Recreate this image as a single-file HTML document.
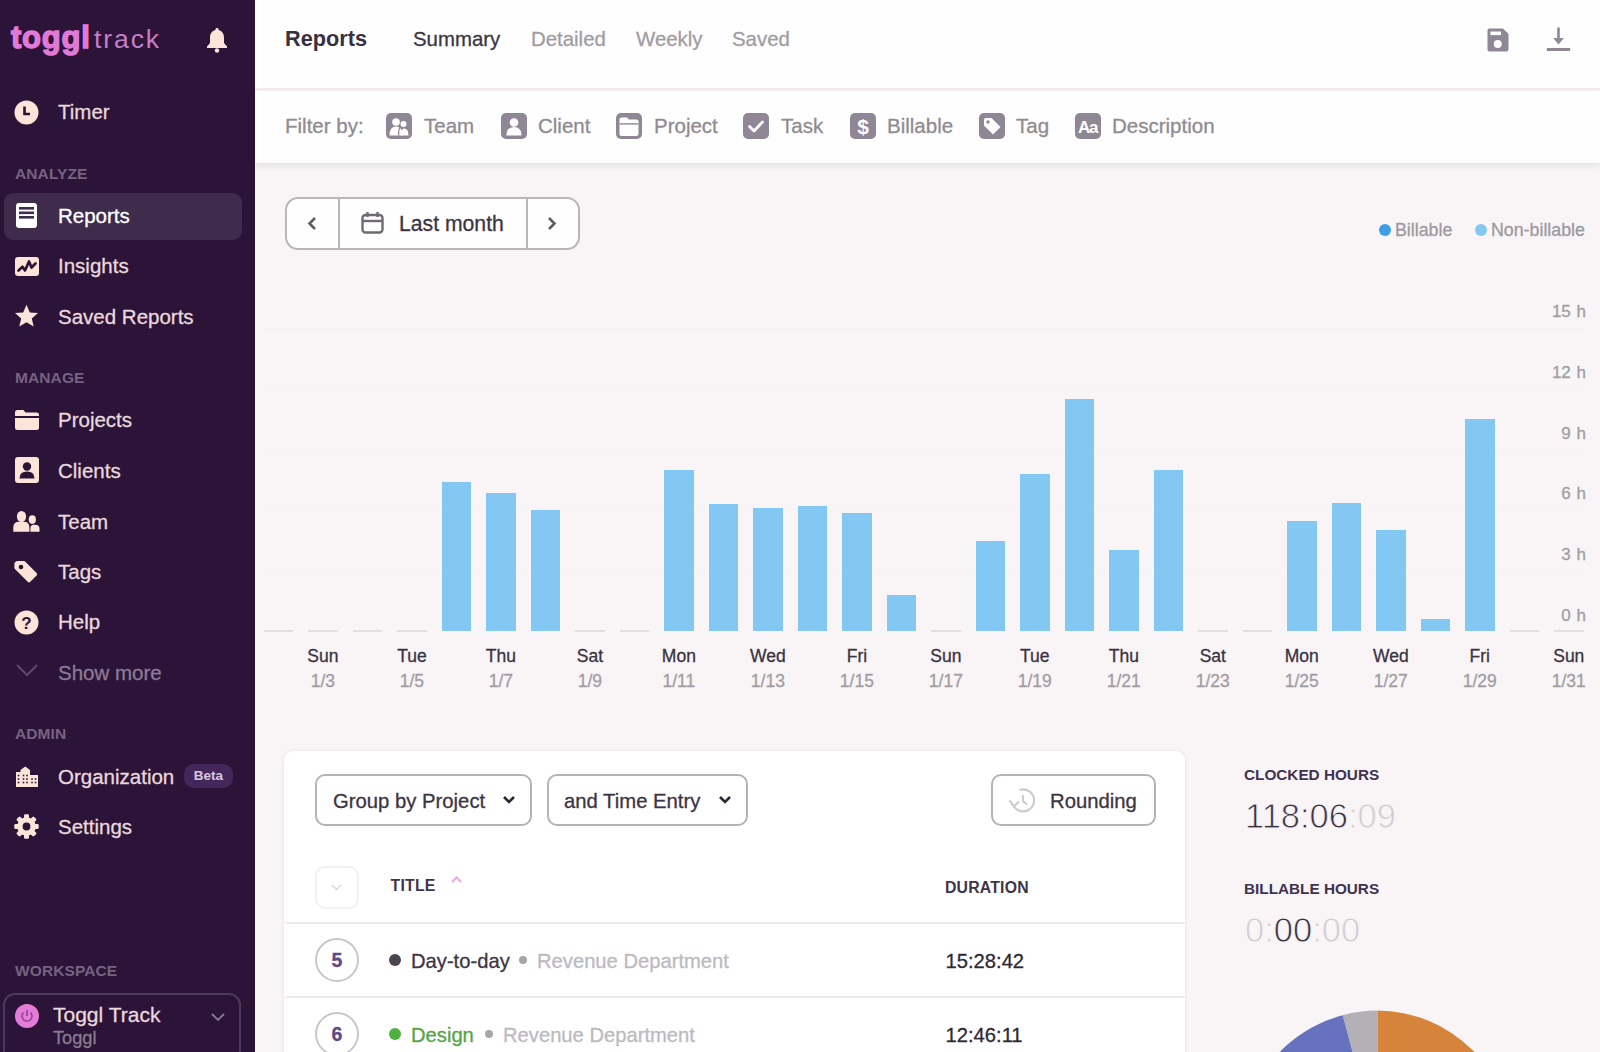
<!DOCTYPE html>
<html><head><meta charset="utf-8">
<style>
*{box-sizing:border-box;margin:0;padding:0}
html,body{width:1600px;height:1052px;overflow:hidden;background:#f9f5f7;font-family:"Liberation Sans",sans-serif}
.a{position:absolute;white-space:nowrap}
#sb div,#hdr div,#flt div,#main div{-webkit-text-stroke:0.3px currentColor}
#sb{position:absolute;left:0;top:0;width:255px;height:1052px;background:#2c1338}
.si{position:absolute;left:58px;font-size:20.5px;color:#e9d8dc;line-height:24px;margin-top:0.8px}
.sh{-webkit-text-stroke:0 !important;position:absolute;left:15px;font-size:15.5px;color:#77637f;letter-spacing:0.1px;font-weight:bold;line-height:16px;margin-top:0.8px}
.ic{position:absolute;left:14px}
#hdr{position:absolute;left:255px;top:0;width:1345px;height:90px;background:#fefefe;border-bottom:2px solid #efedef}
#flt{position:absolute;left:255px;top:91px;width:1345px;height:72px;background:#fefefe;box-shadow:0 2px 7px rgba(0,0,0,0.10)}
.tab{position:absolute;top:26px;font-size:20.4px;line-height:26px;color:#a19da2}
.fi{position:absolute;top:21.5px;width:26px;height:26px}
.ft{position:absolute;top:21.5px;font-size:20.5px;line-height:26px;color:#8f8b91}
.bar{position:absolute;width:29.5px;background:#82c8f2}
.dash{position:absolute;top:630px;width:29.5px;height:2px;background:#e3dfe0}
.xl{position:absolute;top:644.5px;width:80px;text-align:center;font-size:17.5px;line-height:22px;color:#3a3340}
.xd{position:absolute;top:670.3px;width:80px;text-align:center;font-size:17.5px;line-height:22px;color:#a19da3}
.grid{position:absolute;left:263px;width:1323px;height:1px;background:#f6f2f3}
.yl{position:absolute;left:1500px;width:86px;text-align:right;font-size:17px;line-height:22px;color:#a19da3;margin-top:0.8px;word-spacing:1px}
.btn{position:absolute;height:52px;border:2px solid #b5b2b6;border-radius:10px;background:#fff}
.bt{position:absolute;font-size:20.3px;line-height:26px;margin-top:1px;color:#3d3443;white-space:nowrap}
.th{position:absolute;top:876px;-webkit-text-stroke:0 !important;font-size:15.8px;font-weight:bold;line-height:20px;letter-spacing:0.25px;color:#3f3547;white-space:nowrap}
.num{position:absolute;left:315px;width:44px;height:44px;border:2px solid #c9c6ca;border-radius:22px;text-align:center;font-size:19.5px;line-height:41px;color:#5f4a85;font-weight:bold}
.rt{position:absolute;font-size:20.2px;line-height:26px;margin-top:1px;white-space:nowrap}
</style></head><body>
<div id="sb">
  <!-- logo -->
  <div class="a" style="left:11px;top:20px;font-size:31px;font-weight:bold;color:#e07ad6;letter-spacing:0.8px;line-height:36px;-webkit-text-stroke:1.4px #e07ad6">toggl</div>
  <div class="a" style="left:94px;top:23px;font-size:26.5px;color:#c77ec9;-webkit-text-stroke:0;line-height:32px;letter-spacing:1.9px">track</div>
  <!-- bell -->
  <svg class="a" style="left:206px;top:27px" width="22" height="26" viewBox="0 0 22 26"><path d="M11 1c1 0 1.6.7 1.6 1.6v.5C16 4 18 7 18 10.5v5.5l3 3.5v1.5H1v-1.5l3-3.5v-5.5C4 7 6 4 9.4 3.1v-.5C9.4 1.7 10 1 11 1z" fill="#fce5d8"/><circle cx="11" cy="23.5" r="2.2" fill="#fce5d8"/></svg>

  <!-- Timer -->
  <svg class="ic" style="top:100px" width="25" height="25" viewBox="0 0 25 25"><circle cx="12.5" cy="12.5" r="12" fill="#fce5d8"/><path d="M10.5 6.5v7.5h5.5" stroke="#2c1338" stroke-width="2.6" fill="none"/></svg>
  <div class="si" style="top:99px">Timer</div>

  <div class="sh" style="top:165px">ANALYZE</div>
  <div class="a" style="left:3.5px;top:192.5px;width:238px;height:47px;border-radius:9px;background:#3f2b4b"></div>
  <svg class="ic" style="left:16px;top:203px" width="21" height="25" viewBox="0 0 21 25"><rect x="0" y="0" width="21" height="25" rx="3" fill="#fff"/><rect x="3" y="4" width="15" height="2.6" fill="#3f2b4b"/><rect x="3" y="8.5" width="15" height="2.6" fill="#3f2b4b"/><rect x="3" y="13" width="15" height="2.6" fill="#3f2b4b"/></svg>
  <div class="si" style="top:203px;color:#fff">Reports</div>

  <svg class="ic" style="left:15px;top:257px" width="24" height="19" viewBox="0 0 24 19"><rect x="0" y="0" width="24" height="19" rx="3" fill="#fce5d8"/><path d="M3.5 13.5L7.5 9.8 10 13.5 14 4.5 16.5 10.5 20.5 6.5" stroke="#2c1338" stroke-width="2.7" fill="none" stroke-linejoin="round" stroke-linecap="round"/></svg>
  <div class="si" style="top:253.2px">Insights</div>

  <svg class="ic" style="left:14px;top:304px" width="25" height="25" viewBox="0 0 25 25"><path d="M12.5 0.8l3.3 7.6 8.2.7-6.2 5.4 1.9 8.1-7.2-4.3-7.2 4.3 1.9-8.1L1 9.1l8.2-.7z" fill="#fce5d8"/></svg>
  <div class="si" style="top:304px">Saved Reports</div>

  <div class="sh" style="top:369px">MANAGE</div>

  <svg class="ic" style="left:15px;top:410px" width="24" height="20" viewBox="0 0 24 20"><path d="M0 2.5Q0 0 2.5 0h6l2 2.5h11Q24 2.5 24 4.5V6H0z" fill="#fce5d8"/><path d="M0 8h24v9.5Q24 20 21.5 20h-19Q0 20 0 17.5z" fill="#fce5d8"/></svg>
  <div class="si" style="top:407.4px">Projects</div>

  <svg class="ic" style="left:15px;top:457px" width="24" height="26" viewBox="0 0 24 26"><rect x="0" y="0" width="24" height="26" rx="3" fill="#fce5d8"/><circle cx="12" cy="9.5" r="4.2" fill="#2c1338"/><path d="M4.5 21.5q0-7 7.5-7t7.5 7z" fill="#2c1338"/></svg>
  <div class="si" style="top:458px">Clients</div>

  <svg class="a" style="left:0;top:500px" width="45" height="40" viewBox="0 500 45 40"><ellipse cx="21.5" cy="516.5" rx="4.6" ry="5.5" fill="#fce5d8"/><path d="M13.3 531.7V527.5Q13.3 521.8 19 521.8H24Q29.4 521.8 29.4 527.5V531.7z" fill="#fce5d8"/><ellipse cx="32.3" cy="519.6" rx="3.6" ry="4.4" fill="#fce5d8"/><path d="M30.4 531.7V528.8Q30.4 524.8 33.5 524.8H35Q39.5 524.8 39.5 528.8V531.7z" fill="#fce5d8"/></svg>
  <div class="si" style="top:509px">Team</div>

  <svg class="a" style="left:0;top:550px" width="45" height="40" viewBox="0 550 45 40"><path d="M17.2 562.7H23.8L35.3 574.2 29 580.5 16.2 567.7V563.7z" fill="#fce5d8" stroke="#fce5d8" stroke-width="3.6" stroke-linejoin="round"/><circle cx="21" cy="567" r="2.3" fill="#2c1338"/></svg>
  <div class="si" style="top:559px">Tags</div>

  <svg class="ic" style="left:14px;top:610px" width="25" height="25" viewBox="0 0 25 25"><circle cx="12.5" cy="12.5" r="12" fill="#fce5d8"/><text x="12.5" y="18.5" text-anchor="middle" font-family="Liberation Sans" font-weight="bold" font-size="17" fill="#2c1338">?</text></svg>
  <div class="si" style="top:609px">Help</div>

  <svg class="ic" style="left:16px;top:664px" width="22" height="14" viewBox="0 0 22 14"><path d="M1 1l10 10L21 1" stroke="#5e4868" stroke-width="2" fill="none"/></svg>
  <div class="si" style="top:660px;color:#8c7b95">Show more</div>

  <div class="sh" style="top:725px">ADMIN</div>

  <svg class="ic" style="left:16px;top:766px" width="22" height="21" viewBox="0 0 22 21"><rect x="0" y="6" width="5" height="15" fill="#fce5d8"/><path d="M4.5 4L9.25 0.5 14 4V21H4.5z" fill="#fce5d8"/><rect x="13.5" y="9" width="8.5" height="12" fill="#fce5d8"/><rect x="1.7" y="8.7" width="1.6" height="1.6" fill="#2c1338"/><rect x="1.7" y="12.2" width="1.6" height="1.6" fill="#2c1338"/><rect x="1.7" y="15.7" width="1.6" height="1.6" fill="#2c1338"/><rect x="6.7" y="8.7" width="1.6" height="1.6" fill="#2c1338"/><rect x="6.7" y="12.2" width="1.6" height="1.6" fill="#2c1338"/><rect x="6.7" y="15.7" width="1.6" height="1.6" fill="#2c1338"/><rect x="10.2" y="8.7" width="1.6" height="1.6" fill="#2c1338"/><rect x="10.2" y="12.2" width="1.6" height="1.6" fill="#2c1338"/><rect x="10.2" y="15.7" width="1.6" height="1.6" fill="#2c1338"/><rect x="15.2" y="12.2" width="1.6" height="1.6" fill="#2c1338"/><rect x="15.2" y="15.7" width="1.6" height="1.6" fill="#2c1338"/><rect x="18.7" y="12.2" width="1.6" height="1.6" fill="#2c1338"/><rect x="18.7" y="15.7" width="1.6" height="1.6" fill="#2c1338"/></svg>
  <div class="si" style="top:763.8px">Organization</div>
  <div class="a" style="left:184px;top:764px;width:49px;height:24px;border-radius:10px;background:#44275a;color:#d8c6e2;font-size:13.5px;font-weight:bold;line-height:24px;text-align:center;-webkit-text-stroke:0">Beta</div>

  <svg class="ic" style="left:14px;top:814px" width="25" height="25" viewBox="0 0 25 25"><circle cx="12.5" cy="12.5" r="9.3" fill="#fce5d8"/><rect x="10" y="0.3" width="5" height="5" rx="1.2" fill="#fce5d8" transform="rotate(0 12.5 12.5)"/><rect x="10" y="0.3" width="5" height="5" rx="1.2" fill="#fce5d8" transform="rotate(45 12.5 12.5)"/><rect x="10" y="0.3" width="5" height="5" rx="1.2" fill="#fce5d8" transform="rotate(90 12.5 12.5)"/><rect x="10" y="0.3" width="5" height="5" rx="1.2" fill="#fce5d8" transform="rotate(135 12.5 12.5)"/><rect x="10" y="0.3" width="5" height="5" rx="1.2" fill="#fce5d8" transform="rotate(180 12.5 12.5)"/><rect x="10" y="0.3" width="5" height="5" rx="1.2" fill="#fce5d8" transform="rotate(225 12.5 12.5)"/><rect x="10" y="0.3" width="5" height="5" rx="1.2" fill="#fce5d8" transform="rotate(270 12.5 12.5)"/><rect x="10" y="0.3" width="5" height="5" rx="1.2" fill="#fce5d8" transform="rotate(315 12.5 12.5)"/><circle cx="12.5" cy="12.5" r="3.9" fill="#2c1338"/></svg>
  <div class="si" style="top:813.8px">Settings</div>

  <div class="sh" style="top:962px">WORKSPACE</div>
  <div class="a" style="left:3px;top:993px;width:238px;height:70px;border:2px solid #4d3a57;border-radius:12px"></div>
  <svg class="ic" style="left:15px;top:1004px" width="24" height="24" viewBox="0 0 24 24"><circle cx="12" cy="12" r="12" fill="#e57cd8"/><path d="M8.5 8.5a5 5 0 1 0 7 0" stroke="#9a4c9c" stroke-width="1.8" fill="none"/><path d="M12 6v6" stroke="#9a4c9c" stroke-width="1.8"/></svg>
  <div class="si" style="left:53px;top:1002px;font-size:21px">Toggl Track</div>
  <div class="si" style="left:53px;top:1025px;font-size:18.2px;color:#8a7a90">Toggl</div>
  <svg class="a" style="left:211px;top:1013px" width="14" height="9" viewBox="0 0 14 9"><path d="M1 1l6 6 6-6" stroke="#8c7b95" stroke-width="1.8" fill="none"/></svg>
</div>

<!-- header -->
<div id="hdr">
  <div class="a" style="left:30px;top:26px;font-size:21.7px;font-weight:bold;color:#38303f;-webkit-text-stroke:0;line-height:26px">Reports</div>
  <div class="tab" style="left:158px;color:#3d3545">Summary</div>
  <div class="tab" style="left:276px">Detailed</div>
  <div class="tab" style="left:381px">Weekly</div>
  <div class="tab" style="left:477px">Saved</div>
  <svg class="a" style="left:1232px;top:28px" width="22" height="24" viewBox="0 0 22 24"><path d="M2.5 0.5h13.5l5.5 5.5v15.5q0 2-2 2h-17q-2 0-2-2v-19q0-2 2-2z" fill="#8f8795"/><rect x="3.5" y="3.5" width="10.5" height="3.6" fill="#fefefe"/><circle cx="10.75" cy="16" r="4" fill="#fefefe"/></svg>
  <svg class="a" style="left:1290px;top:26px" width="26" height="27" viewBox="0 0 26 27"><path d="M13.5 1.5v12" stroke="#8f8795" stroke-width="2.6"/><path d="M8.2 12h10.6l-5.3 6.6z" fill="#8f8795"/><path d="M1.8 23.5h23.4" stroke="#8f8795" stroke-width="3"/></svg>
</div>

<!-- filter bar -->
<div id="flt">
  <div class="ft" style="left:30px">Filter by:</div>
  <div class="fi" style="left:131px"><svg width="26" height="26" viewBox="0 0 26 26"><rect width="26" height="26" rx="5" fill="#8f8795"/><circle cx="10" cy="9" r="3.8" fill="#fff"/><path d="M3.5 22.5q0-9 6.5-9t6.5 9z" fill="#fff"/><circle cx="17.5" cy="11" r="3" fill="#fff"/><path d="M14.8 22.5q.5-7 3.2-7 4.5 0 4.5 7z" fill="#fff"/><path d="M14.2 13.8q-1.6 1.5-1.6 8.7" stroke="#8f8795" stroke-width="1.3" fill="none"/></svg></div><div class="ft" style="left:169px">Team</div>
  <div class="fi" style="left:246px"><svg width="26" height="26" viewBox="0 0 26 26"><rect width="26" height="26" rx="5" fill="#8f8795"/><circle cx="13" cy="9.5" r="4.3" fill="#fff"/><path d="M5.5 22.5q0-8.5 7.5-8.5t7.5 8.5z" fill="#fff"/></svg></div><div class="ft" style="left:283px">Client</div>
  <div class="fi" style="left:361px"><svg width="26" height="26" viewBox="0 0 26 26"><rect width="26" height="26" rx="5" fill="#8f8795"/><path d="M5.5 4.5h5.5l2 2h7.5q2 0 2 2v12.5q0 2-2 2h-15q-2 0-2-2v-14.5q0-2 2-2z" fill="#fff"/><rect x="3.5" y="10.2" width="19" height="1.4" fill="#8f8795"/></svg></div><div class="ft" style="left:399px">Project</div>
  <div class="fi" style="left:488px"><svg width="26" height="26" viewBox="0 0 26 26"><rect width="26" height="26" rx="5" fill="#8f8795"/><path d="M6.5 13.5l4.5 4.5 8.5-9" stroke="#fff" stroke-width="2.8" fill="none" stroke-linecap="round" stroke-linejoin="round"/></svg></div><div class="ft" style="left:526px">Task</div>
  <div class="fi" style="left:595px"><svg width="26" height="26" viewBox="0 0 26 26"><rect width="26" height="26" rx="5" fill="#8f8795"/><text x="13" y="21" text-anchor="middle" font-family="Liberation Sans" font-weight="bold" font-size="21" fill="#fff">$</text></svg></div><div class="ft" style="left:632px">Billable</div>
  <div class="fi" style="left:724px"><svg width="26" height="26" viewBox="0 0 26 26"><rect width="26" height="26" rx="5" fill="#8f8795"/><path d="M5 6.5q0-1.5 1.5-1.5h6l9 9-7.5 7.5-9-9z" fill="#fff"/><circle cx="9" cy="9" r="1.7" fill="#8f8795"/></svg></div><div class="ft" style="left:761px">Tag</div>
  <div class="fi" style="left:820px"><svg width="26" height="26" viewBox="0 0 26 26"><rect width="26" height="26" rx="5" fill="#8f8795"/><text x="12.5" y="19.5" text-anchor="middle" font-family="Liberation Sans" font-weight="bold" font-size="17" letter-spacing="-1.3" fill="#fff">Aa</text></svg></div><div class="ft" style="left:857px">Description</div>
</div>

<div id="main">
  <!-- date picker -->
  <div class="a" style="left:285px;top:197px;width:295px;height:53px;border:2px solid #b9b6ba;border-radius:13px;background:#fefefe"></div>
  <div class="a" style="left:338px;top:199px;width:2px;height:49px;background:#b9b6ba"></div>
  <div class="a" style="left:526px;top:199px;width:2px;height:49px;background:#b9b6ba"></div>
  <svg class="a" style="left:306px;top:216px" width="12" height="15" viewBox="0 0 12 15"><path d="M9 2L3.5 7.5 9 13" stroke="#615a66" stroke-width="2.6" fill="none"/></svg>
  <svg class="a" style="left:546px;top:216px" width="12" height="15" viewBox="0 0 12 15"><path d="M3 2l5.5 5.5L3 13" stroke="#615a66" stroke-width="2.6" fill="none"/></svg>
  <svg class="a" style="left:361px;top:211px" width="23" height="23" viewBox="0 0 23 23"><rect x="1.5" y="4" width="20" height="17.5" rx="3" stroke="#706a75" stroke-width="2.4" fill="none"/><path d="M1.5 10h20" stroke="#706a75" stroke-width="2.4"/><path d="M6.5 1v5M16.5 1v5" stroke="#706a75" stroke-width="2.4"/></svg>
  <div class="a" style="left:399px;top:210.5px;font-size:21.2px;line-height:26px;color:#3d3443">Last month</div>

  <!-- legend -->
  <div class="a" style="left:1379px;top:223.8px;width:12px;height:12px;border-radius:6px;background:#3c9fe8"></div>
  <div class="a" style="left:1395px;top:219px;font-size:17.8px;line-height:22px;color:#9d99a0">Billable</div>
  <div class="a" style="left:1475px;top:223.8px;width:12px;height:12px;border-radius:6px;background:#82c8f3"></div>
  <div class="a" style="left:1491px;top:219px;font-size:17.8px;line-height:22px;color:#9d99a0">Non-billable</div>

  <!-- gridlines -->
  <div class="grid" style="top:329px"></div>
  <div class="grid" style="top:387px"></div>
  <div class="grid" style="top:448px"></div>
  <div class="grid" style="top:509px"></div>
  <div class="grid" style="top:570px"></div>
  <!-- y labels -->
  <div class="yl" style="top:300px">15 h</div>
  <div class="yl" style="top:361px">12 h</div>
  <div class="yl" style="top:422px">9 h</div>
  <div class="yl" style="top:482px">6 h</div>
  <div class="yl" style="top:543px">3 h</div>
  <div class="yl" style="top:604px">0 h</div>
<div class="dash" style="left:263.6px"></div>
<div class="dash" style="left:308.1px"></div>
<div class="dash" style="left:352.6px"></div>
<div class="dash" style="left:397.1px"></div>
<div class="bar" style="left:441.6px;top:481.6px;height:149.4px"></div>
<div class="bar" style="left:486.1px;top:492.5px;height:138.5px"></div>
<div class="bar" style="left:530.6px;top:509.7px;height:121.3px"></div>
<div class="dash" style="left:575.1px"></div>
<div class="dash" style="left:619.6px"></div>
<div class="bar" style="left:664.1px;top:469.7px;height:161.3px"></div>
<div class="bar" style="left:708.6px;top:504.4px;height:126.6px"></div>
<div class="bar" style="left:753.1px;top:508.0px;height:123.0px"></div>
<div class="bar" style="left:797.6px;top:505.6px;height:125.4px"></div>
<div class="bar" style="left:842.1px;top:512.5px;height:118.5px"></div>
<div class="bar" style="left:886.6px;top:595.0px;height:36.0px"></div>
<div class="dash" style="left:931.1px"></div>
<div class="bar" style="left:975.6px;top:541.0px;height:90.0px"></div>
<div class="bar" style="left:1020.1px;top:473.8px;height:157.2px"></div>
<div class="bar" style="left:1064.6px;top:399.4px;height:231.6px"></div>
<div class="bar" style="left:1109.1px;top:550.3px;height:80.7px"></div>
<div class="bar" style="left:1153.6px;top:469.7px;height:161.3px"></div>
<div class="dash" style="left:1198.1px"></div>
<div class="dash" style="left:1242.6px"></div>
<div class="bar" style="left:1287.1px;top:521.0px;height:110.0px"></div>
<div class="bar" style="left:1331.6px;top:503.4px;height:127.6px"></div>
<div class="bar" style="left:1376.1px;top:530.3px;height:100.7px"></div>
<div class="bar" style="left:1420.6px;top:619.0px;height:12.0px"></div>
<div class="bar" style="left:1465.1px;top:419.4px;height:211.6px"></div>
<div class="dash" style="left:1509.6px"></div>
<div class="dash" style="left:1554.1px"></div>
<div class="xl" style="left:282.9px">Sun</div><div class="xd" style="left:282.9px">1/3</div>
<div class="xl" style="left:371.9px">Tue</div><div class="xd" style="left:371.9px">1/5</div>
<div class="xl" style="left:460.9px">Thu</div><div class="xd" style="left:460.9px">1/7</div>
<div class="xl" style="left:549.9px">Sat</div><div class="xd" style="left:549.9px">1/9</div>
<div class="xl" style="left:638.9px">Mon</div><div class="xd" style="left:638.9px">1/11</div>
<div class="xl" style="left:727.9px">Wed</div><div class="xd" style="left:727.9px">1/13</div>
<div class="xl" style="left:816.9px">Fri</div><div class="xd" style="left:816.9px">1/15</div>
<div class="xl" style="left:905.9px">Sun</div><div class="xd" style="left:905.9px">1/17</div>
<div class="xl" style="left:994.8px">Tue</div><div class="xd" style="left:994.8px">1/19</div>
<div class="xl" style="left:1083.8px">Thu</div><div class="xd" style="left:1083.8px">1/21</div>
<div class="xl" style="left:1172.8px">Sat</div><div class="xd" style="left:1172.8px">1/23</div>
<div class="xl" style="left:1261.8px">Mon</div><div class="xd" style="left:1261.8px">1/25</div>
<div class="xl" style="left:1350.8px">Wed</div><div class="xd" style="left:1350.8px">1/27</div>
<div class="xl" style="left:1439.8px">Fri</div><div class="xd" style="left:1439.8px">1/29</div>
<div class="xl" style="left:1528.8px">Sun</div><div class="xd" style="left:1528.8px">1/31</div>

  <!-- card -->
  <div class="a" style="left:284px;top:751px;width:901px;height:320px;border-radius:9px;background:#fff;box-shadow:0 0 4px rgba(60,30,60,0.10)"></div>
  <div class="btn" style="left:315px;top:774px;width:217px"></div>
  <div class="bt" style="left:333px;top:787px">Group by Project</div>
  <svg class="a" style="left:502px;top:795px" width="14" height="10" viewBox="0 0 14 10"><path d="M2 2l5 5 5-5" stroke="#2f2535" stroke-width="2.6" fill="none"/></svg>
  <div class="btn" style="left:547px;top:774px;width:201px"></div>
  <div class="bt" style="left:564px;top:787px">and Time Entry</div>
  <svg class="a" style="left:718px;top:795px" width="14" height="10" viewBox="0 0 14 10"><path d="M2 2l5 5 5-5" stroke="#2f2535" stroke-width="2.6" fill="none"/></svg>
  <div class="btn" style="left:991px;top:774px;width:165px"></div>
  <svg class="a" style="left:1007px;top:786px" width="32" height="29" viewBox="0 0 32 29"><path d="M7 20.5A11 11 0 1 0 12.5 4" stroke="#cdcbcf" stroke-width="2.2" fill="none"/><path d="M2.5 14.5l4.5 6 5-5" stroke="#cdcbcf" stroke-width="2.2" fill="none"/><path d="M16 9v6l4 3.5" stroke="#cdcbcf" stroke-width="2" fill="none"/></svg>
  <div class="bt" style="left:1050px;top:787px">Rounding</div>

  <div class="a" style="left:315px;top:866px;width:44px;height:43px;border:2px solid #f3f1f3;border-radius:10px"></div>
  <svg class="a" style="left:331px;top:884px" width="11" height="7" viewBox="0 0 11 7"><path d="M1 1l4.5 4.5L10 1" stroke="#d9d6da" stroke-width="1.4" fill="none"/></svg>
  <div class="th" style="left:390.5px">TITLE</div>
  <svg class="a" style="left:450px;top:875px" width="13" height="9" viewBox="0 0 13 9"><path d="M2 7l4.5-4.5L11 7" stroke="#e7a9e3" stroke-width="2" fill="none"/></svg>
  <div class="th" style="left:945px;margin-top:1.5px;letter-spacing:0.2px">DURATION</div>
  <div class="a" style="left:285px;top:922px;width:900px;height:2px;background:#eeebee"></div>

  <div class="num" style="top:938px">5</div>
  <div class="a" style="left:389px;top:954px;width:12px;height:12px;border-radius:6px;background:#4b4452"></div>
  <div class="rt" style="left:411px;top:947px;color:#3e3545">Day-to-day</div>
  <div class="a" style="left:519px;top:956px;width:8px;height:8px;border-radius:4px;background:#a9a6ab"></div>
  <div class="rt" style="left:537px;top:947px;color:#bdbabf">Revenue Department</div>
  <div class="rt" style="left:945.5px;top:947px;color:#2f2834">15:28:42</div>
  <div class="a" style="left:285px;top:996px;width:900px;height:2px;background:#eeebee"></div>

  <div class="num" style="top:1012px">6</div>
  <div class="a" style="left:389px;top:1028px;width:12px;height:12px;border-radius:6px;background:#4fb040"></div>
  <div class="rt" style="left:411px;top:1021px;color:#55a545">Design</div>
  <div class="a" style="left:485px;top:1030px;width:8px;height:8px;border-radius:4px;background:#a9a6ab"></div>
  <div class="rt" style="left:503px;top:1021px;color:#bdbabf">Revenue Department</div>
  <div class="rt" style="left:945.5px;top:1021px;color:#2f2834">12:46:11</div>

  <!-- right stats -->
  <div class="a" style="left:1244px;top:764.5px;font-size:15.3px;font-weight:bold;line-height:20px;color:#3f3350;-webkit-text-stroke:0">CLOCKED HOURS</div>
  <div class="a" style="left:1245px;top:796px;font-size:34.5px;line-height:40px;color:#3b3145;-webkit-text-stroke:0.8px #f9f5f7">118:06<span style="color:#d0cdd2">:09</span></div>
  <div class="a" style="left:1244px;top:879px;font-size:15.3px;font-weight:bold;line-height:20px;color:#3f3350;-webkit-text-stroke:0">BILLABLE HOURS</div>
  <div class="a" style="left:1245px;top:910px;font-size:34.5px;line-height:40px;color:#d0cdd2;-webkit-text-stroke:0.8px #f9f5f7">0:<span style="color:#3b3145">00</span>:00</div>

  <!-- pie -->
  <svg class="a" style="left:1200px;top:1000px" width="360" height="52" viewBox="1200 1000 360 52">
    <path d="M1377.4 1144.6L1377.4 1010.6A134 134 0 0 1 1511.4 1144.6z" fill="#d6843a"/>
    <path d="M1377.4 1144.6L1342.7 1015.2A134 134 0 0 1 1377.4 1010.6z" fill="#b3b1b5"/>
    <path d="M1377.4 1144.6L1250 1100A134 134 0 0 1 1342.7 1015.2z" fill="#6672bd"/>
  </svg>
</div>

</body></html>
